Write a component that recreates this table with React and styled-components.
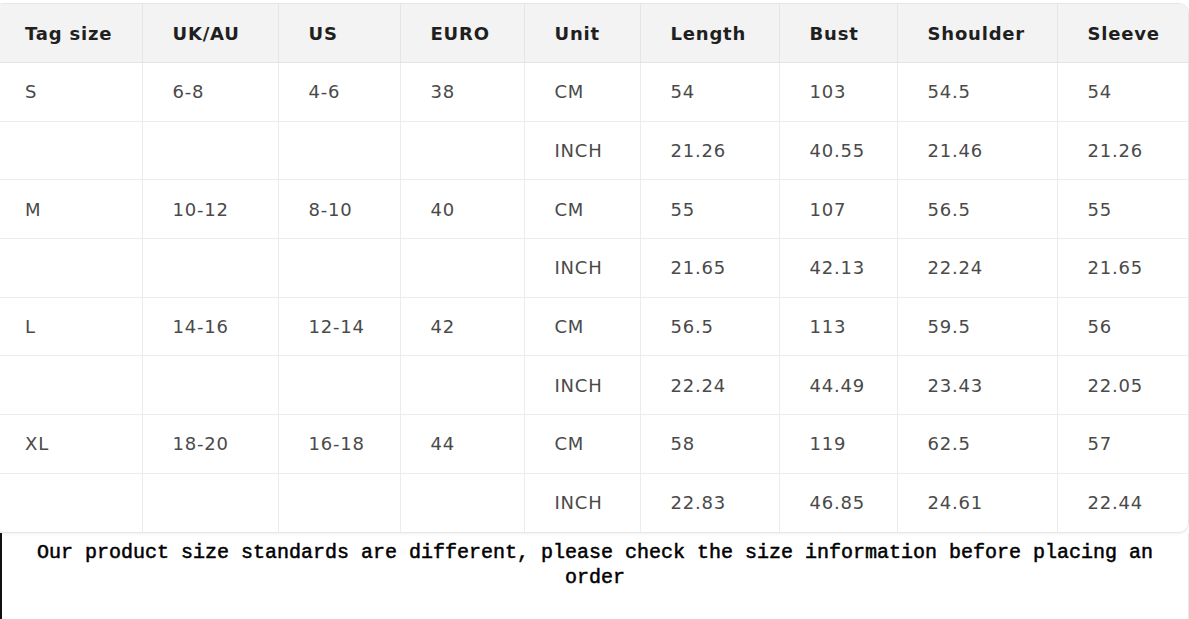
import React from 'react';
import styled, { createGlobalStyle } from 'styled-components';

const GlobalStyle = createGlobalStyle`
    html, body {
        margin: 0;
        padding: 0;
        background: #ffffff;
    }
`;

const Page = styled.div`
    width: 1189px;
    height: 619px;
    overflow: hidden;
    padding-top: 3px;
    box-sizing: border-box;
`;

const TableFrame = styled.div`
    margin-left: -6px;
    width: 1193px;
    border: 1px solid #e6e6e6;
    border-radius: 10px;
    overflow: hidden;
    box-shadow: 0 1px 3px rgba(0, 0, 0, 0.06);
`;

const Table = styled.table`
    width: 100%;
    border-collapse: collapse;
    table-layout: fixed;
    font-family: 'DejaVu Sans', 'Noto Sans', sans-serif;
    font-size: 18px;
    letter-spacing: 0.8px;
`;

const HeadCell = styled.th`
    height: 58px;
    padding: 0 0 0 30px;
    text-align: left;
    font-weight: 700;
    color: #1f1f1f;
    background: #f3f3f3;
    border-right: 1px solid #e4e4e4;
    border-bottom: 1px solid #e4e4e4;
    &:last-child {
        border-right: none;
    }
`;

const Cell = styled.td`
    height: 57.7px;
    padding: 0 0 0 30px;
    text-align: left;
    color: #4a4a4a;
    border-right: 1px solid #ececec;
    border-bottom: 1px solid #ececec;
    &:last-child {
        border-right: none;
    }
`;

const Row = styled.tr`
    &:last-child td {
        border-bottom: none;
    }
`;

const Notice = styled.div`
    width: 1189px;
    height: 100px;
    box-sizing: border-box;
    border-left: 2px solid #111111;
    border-right: 1px solid #e8e8e8;
    padding: 7px 14px 0;
    text-align: center;
    font-family: 'Liberation Mono', 'DejaVu Sans Mono', monospace;
    font-size: 20px;
    line-height: 25px;
    font-weight: 400;
    -webkit-text-stroke: 0.5px #000000;
    color: #000000;
`;

const columns = [147, 136, 122, 124, 116, 139, 118, 160, 131];
const headers = ['Tag size', 'UK/AU', 'US', 'EURO', 'Unit', 'Length', 'Bust', 'Shoulder', 'Sleeve'];

const sizes = [
    { tag: 'S', uk: '6-8', us: '4-6', euro: '38', cm: ['54', '103', '54.5', '54'], inch: ['21.26', '40.55', '21.46', '21.26'] },
    { tag: 'M', uk: '10-12', us: '8-10', euro: '40', cm: ['55', '107', '56.5', '55'], inch: ['21.65', '42.13', '22.24', '21.65'] },
    { tag: 'L', uk: '14-16', us: '12-14', euro: '42', cm: ['56.5', '113', '59.5', '56'], inch: ['22.24', '44.49', '23.43', '22.05'] },
    { tag: 'XL', uk: '18-20', us: '16-18', euro: '44', cm: ['58', '119', '62.5', '57'], inch: ['22.83', '46.85', '24.61', '22.44'] },
];

function App() {
    const rows = [];
    sizes.forEach((s) => {
        rows.push([s.tag, s.uk, s.us, s.euro, 'CM', ...s.cm]);
        rows.push(['', '', '', '', 'INCH', ...s.inch]);
    });

    return (
        <>
            <GlobalStyle />
            <Page>
                <TableFrame>
                    <Table>
                        <colgroup>
                            {columns.map((w, i) => (
                                <col key={i} style={{ width: w }} />
                            ))}
                        </colgroup>
                        <thead>
                            <tr>
                                {headers.map((h) => (
                                    <HeadCell key={h}>{h}</HeadCell>
                                ))}
                            </tr>
                        </thead>
                        <tbody>
                            {rows.map((r, i) => (
                                <Row key={i}>
                                    {r.map((v, j) => (
                                        <Cell key={j}>{v}</Cell>
                                    ))}
                                </Row>
                            ))}
                        </tbody>
                    </Table>
                </TableFrame>
                <Notice>
                    Our product size standards are different, please check the size information before placing an order
                </Notice>
            </Page>
        </>
    );
}

export default App;
